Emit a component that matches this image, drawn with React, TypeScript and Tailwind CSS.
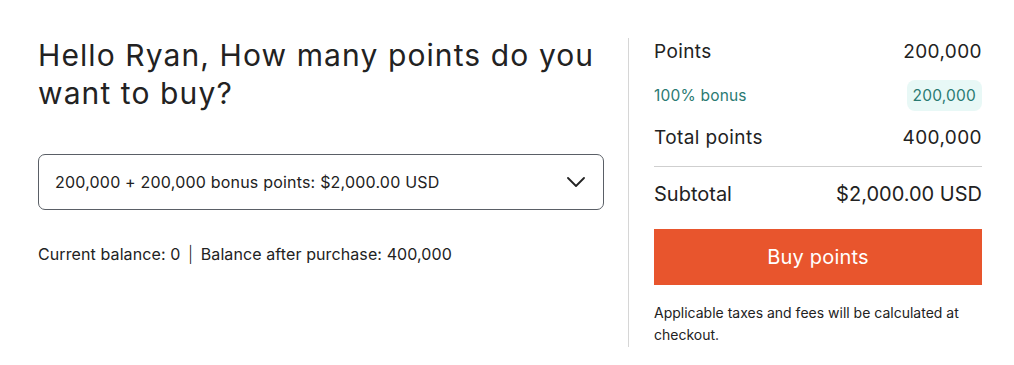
export default function App() {
  return (
    <div className="flex min-h-[365px] w-[1014px] bg-white font-['Inter',sans-serif] text-[#222222]">
      <div className="ml-[38px] w-[566px] pt-[36px]">
        <h1 className="text-[30px] leading-[38px] font-normal tracking-[1.1px]">
          Hello Ryan, How many points do you want to buy?
        </h1>
        <button className="mt-[42px] flex h-[56px] w-full items-center justify-between rounded-[7px] border border-[#5a5f66] pl-[16px] pr-[18px] text-[16px] tracking-[0.2px]">
          <span>200,000 + 200,000 bonus points: $2,000.00 USD</span>
          <svg width="18" height="10" viewBox="0 0 18 10" fill="none">
            <path d="M1 1L9 9L17 1" stroke="#222" strokeWidth="1.8" strokeLinecap="round" strokeLinejoin="round" />
          </svg>
        </button>
        <p className="mt-[32px] text-[16px] tracking-[0.1px]">
          Current balance: 0 <span className="mx-[3px] font-light">|</span> Balance after purchase: 400,000
        </p>
      </div>
      <div className="mt-[38px] mb-[18px] ml-[24px] w-px bg-[#d6d6d6]" />
      <div className="ml-[25px] w-[328px] pt-[38px]">
        <div className="flex items-center justify-between text-[19px] leading-[28px] tracking-[0.4px]">
          <span>Points</span>
          <span>200,000</span>
        </div>
        <div className="mt-[14px] flex items-center justify-between text-[15.5px] tracking-[0.2px] text-[#2a7a72]">
          <span>100% bonus</span>
          <span className="rounded-[8px] bg-[#e8f8f6] px-[6px] py-[6px] leading-[19px]">200,000</span>
        </div>
        <div className="mt-[13px] flex items-center justify-between text-[19px] leading-[28px] tracking-[0.4px]">
          <span>Total points</span>
          <span>400,000</span>
        </div>
        <div className="mt-[14px] h-px bg-[#cfcfcf]" />
        <div className="mt-[13px] flex items-center justify-between text-[20px] leading-[28px]">
          <span>Subtotal</span>
          <span>$2,000.00 USD</span>
        </div>
        <button className="mt-[21px] flex h-[56px] w-full items-center justify-center bg-[#e8552d] text-[20px] tracking-[0.2px] text-white">
          Buy points
        </button>
        <p className="mt-[17px] text-[14px] leading-[22px]">
          Applicable taxes and fees will be calculated at checkout.
        </p>
      </div>
    </div>
  )
}
